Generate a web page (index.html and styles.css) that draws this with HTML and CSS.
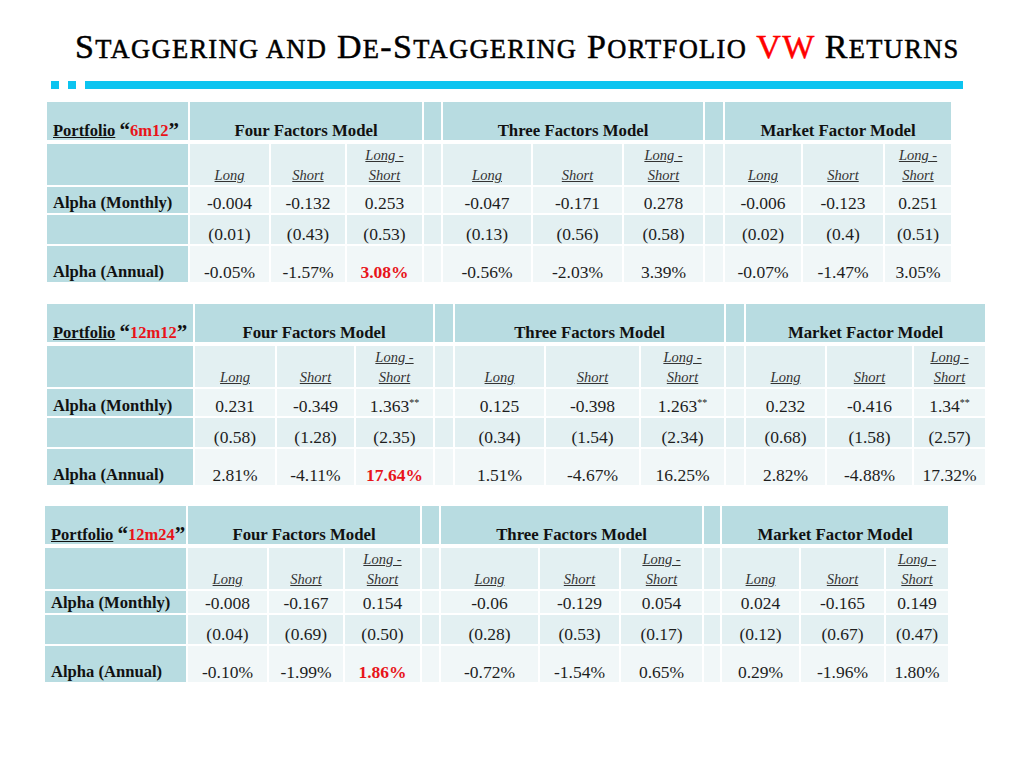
FILE: index.html
```html
<!DOCTYPE html>
<html>
<head>
<meta charset="utf-8">
<link rel="stylesheet" href="styles.css">
</head>
<body>
<div class="slide">
  <h1 class="title">S<span class="sc">taggering and</span> D<span class="sc">e</span>-S<span class="sc">taggering</span> P<span class="sc">ortfolio</span> <span class="red">VW</span> R<span class="sc">eturns</span></h1>
  <div class="bar"><span class="sq"></span><span class="sq"></span><span class="line"></span></div>

  <table class="grid t1">
    <colgroup><col><col><col><col><col><col><col><col><col><col><col><col></colgroup>
    <tr class="r-head"><th class="lab"><u>Portfolio</u> <span class="q">“</span><span class="red">6m12</span><span class="q">”</span></th><th colspan="3">Four Factors Model</th><th class="sp"></th><th colspan="3">Three Factors Model</th><th class="sp"></th><th colspan="3">Market Factor Model</th></tr>
    <tr class="r-sub"><td class="lab"></td><td><i>Long</i></td><td><i>Short</i></td><td><i>Long -<br>Short</i></td><td class="sp"></td><td><i>Long</i></td><td><i>Short</i></td><td><i>Long -<br>Short</i></td><td class="sp"></td><td><i>Long</i></td><td><i>Short</i></td><td><i>Long -<br>Short</i></td></tr>
    <tr class="r-mon"><td class="lab">Alpha (Monthly)</td><td>-0.004</td><td>-0.132</td><td>0.253</td><td class="sp"></td><td>-0.047</td><td>-0.171</td><td>0.278</td><td class="sp"></td><td>-0.006</td><td>-0.123</td><td>0.251</td></tr>
    <tr class="r-t"><td class="lab"></td><td>(0.01)</td><td>(0.43)</td><td>(0.53)</td><td class="sp"></td><td>(0.13)</td><td>(0.56)</td><td>(0.58)</td><td class="sp"></td><td>(0.02)</td><td>(0.4)</td><td>(0.51)</td></tr>
    <tr class="r-ann"><td class="lab">Alpha (Annual)</td><td>-0.05%</td><td>-1.57%</td><td class="hi">3.08%</td><td class="sp"></td><td>-0.56%</td><td>-2.03%</td><td>3.39%</td><td class="sp"></td><td>-0.07%</td><td>-1.47%</td><td>3.05%</td></tr>
  </table>

  <table class="grid t2">
    <colgroup><col><col><col><col><col><col><col><col><col><col><col><col></colgroup>
    <tr class="r-head"><th class="lab"><u>Portfolio</u> <span class="q">“</span><span class="red">12m12</span><span class="q">”</span></th><th colspan="3">Four Factors Model</th><th class="sp"></th><th colspan="3">Three Factors Model</th><th class="sp"></th><th colspan="3">Market Factor Model</th></tr>
    <tr class="r-sub"><td class="lab"></td><td><i>Long</i></td><td><i>Short</i></td><td><i>Long -<br>Short</i></td><td class="sp"></td><td><i>Long</i></td><td><i>Short</i></td><td><i>Long -<br>Short</i></td><td class="sp"></td><td><i>Long</i></td><td><i>Short</i></td><td><i>Long -<br>Short</i></td></tr>
    <tr class="r-mon"><td class="lab">Alpha (Monthly)</td><td>0.231</td><td>-0.349</td><td>1.363<sup>**</sup></td><td class="sp"></td><td>0.125</td><td>-0.398</td><td>1.263<sup>**</sup></td><td class="sp"></td><td>0.232</td><td>-0.416</td><td>1.34<sup>**</sup></td></tr>
    <tr class="r-t"><td class="lab"></td><td>(0.58)</td><td>(1.28)</td><td>(2.35)</td><td class="sp"></td><td>(0.34)</td><td>(1.54)</td><td>(2.34)</td><td class="sp"></td><td>(0.68)</td><td>(1.58)</td><td>(2.57)</td></tr>
    <tr class="r-ann"><td class="lab">Alpha (Annual)</td><td>2.81%</td><td>-4.11%</td><td class="hi">17.64%</td><td class="sp"></td><td>1.51%</td><td>-4.67%</td><td>16.25%</td><td class="sp"></td><td>2.82%</td><td>-4.88%</td><td>17.32%</td></tr>
  </table>

  <table class="grid t3">
    <colgroup><col><col><col><col><col><col><col><col><col><col><col><col></colgroup>
    <tr class="r-head"><th class="lab"><u>Portfolio</u> <span class="q">“</span><span class="red">12m24</span><span class="q">”</span></th><th colspan="3">Four Factors Model</th><th class="sp"></th><th colspan="3">Three Factors Model</th><th class="sp"></th><th colspan="3">Market Factor Model</th></tr>
    <tr class="r-sub"><td class="lab"></td><td><i>Long</i></td><td><i>Short</i></td><td><i>Long -<br>Short</i></td><td class="sp"></td><td><i>Long</i></td><td><i>Short</i></td><td><i>Long -<br>Short</i></td><td class="sp"></td><td><i>Long</i></td><td><i>Short</i></td><td><i>Long -<br>Short</i></td></tr>
    <tr class="r-mon"><td class="lab">Alpha (Monthly)</td><td>-0.008</td><td>-0.167</td><td>0.154</td><td class="sp"></td><td>-0.06</td><td>-0.129</td><td>0.054</td><td class="sp"></td><td>0.024</td><td>-0.165</td><td>0.149</td></tr>
    <tr class="r-t"><td class="lab"></td><td>(0.04)</td><td>(0.69)</td><td>(0.50)</td><td class="sp"></td><td>(0.28)</td><td>(0.53)</td><td>(0.17)</td><td class="sp"></td><td>(0.12)</td><td>(0.67)</td><td>(0.47)</td></tr>
    <tr class="r-ann"><td class="lab">Alpha (Annual)</td><td>-0.10%</td><td>-1.99%</td><td class="hi">1.86%</td><td class="sp"></td><td>-0.72%</td><td>-1.54%</td><td>0.65%</td><td class="sp"></td><td>0.29%</td><td>-1.96%</td><td>1.80%</td></tr>
  </table>
</div>
</body>
</html>
```

FILE: styles.css
```css
html, body {
  margin: 0;
  padding: 0;
  background: #ffffff;
}

.slide {
  width: 1024px;
  height: 768px;
  padding-top: 30px;
  box-sizing: border-box;
  font-family: "Liberation Serif", "Times New Roman", serif;
  color: #111;
}

.title {
  margin: 0 0 0 75px;
  height: 33px;
  font-size: 34px;
  line-height: 33px;
  font-weight: normal;
  color: #000;
  white-space: nowrap;
  letter-spacing: 1.3px;
  -webkit-text-stroke: 0.5px #000;
}

.title .sc {
  font-size: 26.5px;
  text-transform: uppercase;
}

.red {
  color: #e8141a;
}

.title .red {
  color: #ff0000;
  -webkit-text-stroke: 0.5px #ff0000;
}

.bar {
  display: flex;
  align-items: stretch;
  height: 8px;
  margin: 18px 0 0 51px;
  width: 912px;
  gap: 9px;
}

.bar .sq {
  width: 8px;
  background: #0cc4f0;
}

.bar .line {
  flex: 1;
  background: #0cc4f0;
}

.grid {
  border-collapse: separate;
  border-spacing: 2px;
  table-layout: fixed;
  font-family: "Liberation Serif", "Times New Roman", serif;
}

.grid th, .grid td {
  padding: 0;
  vertical-align: bottom;
  text-align: center;
  background: #eef6f7;
  white-space: nowrap;
  overflow: visible;
}

.grid th {
  background: #b8dce1;
  border-bottom: 2px solid #ffffff;
  font-size: 16.8px;
  font-weight: bold;
  color: #111;
  line-height: 18px;
  padding-bottom: 0;
}

.grid th.lab {
  text-align: left;
  padding-left: 6px;
  font-size: 16.5px;
}

.grid th .q {
  font-size: 21px;
  line-height: 0;
  vertical-align: -1px;
}

.grid td.lab {
  background: #b8dce1;
  text-align: left;
  padding-left: 6px;
  font-weight: bold;
  font-size: 16.6px;
  color: #111;
}

.grid td {
  font-size: 17.5px;
  line-height: 20px;
  color: #1d1d1d;
}

.r-head { height: 40px; }

.r-sub td {
  background: #e3f0f2;
  font-size: 14.5px;
  line-height: 20px;
  color: #333;
  padding-bottom: 0;
}

.r-sub i {
  text-decoration: underline;
}

.r-mon td { background: #eef6f7; }
.r-t td { background: #e3f0f2; }
.r-ann td { background: #f1f7f8; }

.r-sub td.sp { background: #e3f0f2; }
.r-mon td.sp { background: #eef6f7; }
.r-t td.sp { background: #e3f0f2; }
.r-ann td.sp { background: #f1f7f8; }

.grid td.hi {
  color: #e8141a;
  font-weight: bold;
}

.grid sup {
  font-size: 10px;
  line-height: 0;
  vertical-align: 6px;
}

/* table 1 */
.t1 {
  margin: 11px 0 0 45px;
  width: 908px;
}
.t1 .r-sub { height: 41px; }
.t1 .r-mon { height: 26px; }
.t1 .r-t { height: 29px; }
.t1 .r-ann { height: 36px; }
.t1 col:nth-child(1) { width: 141px; }
.t1 col:nth-child(2) { width: 79px; }
.t1 col:nth-child(3) { width: 74px; }
.t1 col:nth-child(4) { width: 75px; }
.t1 col:nth-child(5) { width: 17px; }
.t1 col:nth-child(6) { width: 88px; }
.t1 col:nth-child(7) { width: 89px; }
.t1 col:nth-child(8) { width: 79px; }
.t1 col:nth-child(9) { width: 18px; }
.t1 col:nth-child(10) { width: 76px; }
.t1 col:nth-child(11) { width: 80px; }
.t1 col:nth-child(12) { width: 66px; }

/* table 2 */
.t2 {
  margin: 18px 0 0 45px;
  width: 942px;
}
.t2 .r-sub { height: 41px; }
.t2 .r-mon { height: 27px; }
.t2 .r-t { height: 29px; }
.t2 .r-ann { height: 36px; }
.t2 col:nth-child(1) { width: 146px; }
.t2 col:nth-child(2) { width: 80px; }
.t2 col:nth-child(3) { width: 77px; }
.t2 col:nth-child(4) { width: 77px; }
.t2 col:nth-child(5) { width: 18px; }
.t2 col:nth-child(6) { width: 89px; }
.t2 col:nth-child(7) { width: 93px; }
.t2 col:nth-child(8) { width: 83px; }
.t2 col:nth-child(9) { width: 18px; }
.t2 col:nth-child(10) { width: 79px; }
.t2 col:nth-child(11) { width: 85px; }
.t2 col:nth-child(12) { width: 71px; }

/* table 3 */
.t3 {
  margin: 17px 0 0 43px;
  width: 907px;
}
.t3 .r-sub { height: 41px; }
.t3 .r-mon { height: 22px; }
.t3 .r-t { height: 29px; }
.t3 .r-ann { height: 36px; }
.t3 col:nth-child(1) { width: 141px; }
.t3 col:nth-child(2) { width: 79px; }
.t3 col:nth-child(3) { width: 74px; }
.t3 col:nth-child(4) { width: 75px; }
.t3 col:nth-child(5) { width: 17px; }
.t3 col:nth-child(6) { width: 97px; }
.t3 col:nth-child(7) { width: 79px; }
.t3 col:nth-child(8) { width: 81px; }
.t3 col:nth-child(9) { width: 16px; }
.t3 col:nth-child(10) { width: 77px; }
.t3 col:nth-child(11) { width: 83px; }
.t3 col:nth-child(12) { width: 62px; }
```
